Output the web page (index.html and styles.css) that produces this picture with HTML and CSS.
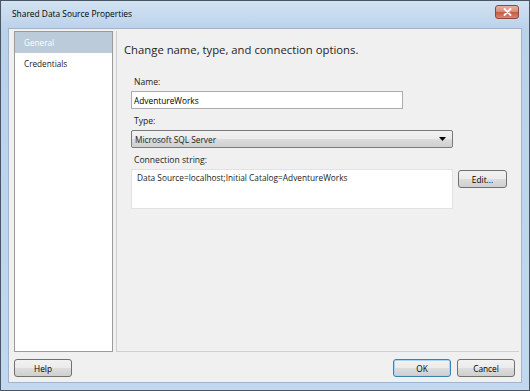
FILE: index.html
```html
<html>
<head>
    <meta charset="UTF-8">
    <meta name="viewport" content="width=device-width, initial-scale=1.0">
    <title>Shared Data Source Properties</title>
    <link rel="stylesheet" href="styles.css">
</head>
<body>
<div class="window">
    <div class="titlebar">
        <span class="title">Shared Data Source Properties</span>
        <button class="close" type="button">
            <svg width="9" height="8" viewBox="0 0 9 8">
                <path d="M1.5 1 L7.5 7 M7.5 1 L1.5 7" stroke="#ffffff" stroke-width="1.8" stroke-linecap="round"/>
            </svg>
        </button>
    </div>

    <div class="client">
        <div class="main">
            <ul class="nav">
                <li class="active">General</li>
                <li>Credentials</li>
            </ul>

            <div class="panel">
                <h1>Change name, type, and connection options.</h1>
                <form class="props-form">
                    <div class="field">
                        <label for="ds-name">Name:</label>
                        <input type="text" id="ds-name" class="text-input name-input" value="AdventureWorks">
                    </div>

                    <div class="field">
                        <label for="ds-type">Type:</label>
                        <div class="select">
                            <span>Microsoft SQL Server</span>
                            <svg width="7" height="4" viewBox="0 0 7 4"><path d="M0 0 H7 L3.5 4 Z" fill="#000"/></svg>
                        </div>
                    </div>

                    <div class="field">
                        <label for="ds-conn">Connection string:</label>
                        <div class="conn-row">
                            <div class="textarea" id="ds-conn">Data Source=localhost;Initial Catalog=AdventureWorks</div>
                            <button type="button" class="button edit">Edit...</button>
                        </div>
                    </div>
                </form>
            </div>
        </div>

        <div class="footer">
            <button type="button" class="button wide">Help</button>
            <div class="footer-right">
                <button type="button" class="button wide default">OK</button>
                <button type="button" class="button wide">Cancel</button>
            </div>
        </div>
    </div>
</div>
</body>
</html>
```

FILE: styles.css
```css
:root {
    --frame: #bed4ea;
    --frame-dark: #4a5563;
    --client-bg: #f0f0f0;
    --text-color: #1b1b1b;
    --input-border: #abadb3;
    --panel-line: #d0d0d0;
}

body, html {
    margin: 0;
    padding: 0;
    background: #ffffff;
    font-family: 'Open Sans', 'Noto Sans', sans-serif;
    color: var(--text-color);
}

.window {
    width: 530px;
    height: 391px;
    box-sizing: border-box;
    border: 1px solid var(--frame-dark);
    background: linear-gradient(to bottom, #d2e2f2 0%, #bad1ea 30px, #c2d8ee 100%);
    padding: 0 7px 7px 7px;
    display: flex;
    flex-direction: column;
}

.titlebar {
    height: 27px;
    display: flex;
    align-items: center;
    justify-content: space-between;
    padding: 0 3px 0 4px;
}

.title {
    font-size: 8.4px;
    color: #000;
    margin-top: -3px;
}

.close {
    width: 24px;
    height: 14px;
    margin-top: -5px;
    padding: 0;
    border: 1px solid #8a4a3e;
    border-radius: 3px;
    background: linear-gradient(to bottom, #e6b0a2 0%, #d98f7b 45%, #c85a43 55%, #d88670 100%);
    display: flex;
    align-items: center;
    justify-content: center;
}

.client {
    flex: 1;
    display: flex;
    flex-direction: column;
    background: var(--client-bg);
    border: 1px solid #9fb5cd;
}

.main {
    flex: 1;
    display: flex;
    padding: 2px 2px 0 5px;
}

.nav {
    list-style: none;
    margin: 0;
    padding: 0;
    width: 97px;
    border: 1px solid #9c9c9c;
    background: #ffffff;
    font-size: 8.2px;
}

.nav li {
    height: 21px;
    line-height: 21px;
    padding-left: 9px;
}

.nav li.active {
    background: #bccbda;
    color: #ffffff;
}

.panel {
    flex: 1;
    margin-left: 3px;
    border-left: 1px solid var(--panel-line);
    border-bottom: 1px solid var(--panel-line);
    padding-left: 7px;
}

.panel h1 {
    font-size: 11.3px;
    font-weight: normal;
    line-height: 16px;
    margin: 11px 0 0 0;
    color: #1e1e1e;
}

.props-form {
    margin: 18px 0 0 7px;
    display: flex;
    flex-direction: column;
    gap: 6px;
}

.field {
    display: flex;
    flex-direction: column;
    gap: 3px;
}

.field label {
    font-size: 8.6px;
    line-height: 12px;
    padding-left: 3px;
}

.text-input {
    box-sizing: border-box;
    height: 18px;
    border: 1px solid var(--input-border);
    background: #ffffff;
    font-family: inherit;
    font-size: 8.3px;
    padding: 0 2px;
    color: #000;
    outline: none;
}

.name-input {
    width: 272px;
}

.select {
    box-sizing: border-box;
    width: 322px;
    height: 18px;
    border: 1px solid #7a7a7a;
    border-radius: 2px;
    background: linear-gradient(to bottom, #f2f2f2 0%, #ebebeb 50%, #dddddd 51%, #cfcfcf 100%);
    display: flex;
    align-items: center;
    justify-content: space-between;
    padding: 0 6px 0 3px;
    font-size: 8.3px;
}

.conn-row {
    display: flex;
    gap: 5px;
    align-items: flex-start;
}

.textarea {
    box-sizing: border-box;
    width: 322px;
    height: 40px;
    border: 1px solid #e2e2e2;
    background: #ffffff;
    font-size: 8.3px;
    padding: 2px 5px;
}

.button {
    box-sizing: border-box;
    height: 18px;
    border: 1px solid #707070;
    border-radius: 3px;
    background: linear-gradient(to bottom, #f2f2f2 0%, #ebebeb 50%, #dddddd 51%, #cfcfcf 100%);
    font-family: inherit;
    font-size: 8.3px;
    color: #000;
    padding: 0;
    cursor: pointer;
}

.button.edit {
    width: 49px;
    margin-top: 1px;
}

.button.wide {
    width: 58px;
}

.button.default {
    border-color: #3c7fb1;
    box-shadow: inset 0 0 0 1px #a9d6f4;
}

.footer {
    height: 30px;
    display: flex;
    justify-content: space-between;
    align-items: flex-start;
    padding: 7px 6px 0 5px;
    box-sizing: border-box;
}

.footer-right {
    display: flex;
    gap: 6px;
}
```
